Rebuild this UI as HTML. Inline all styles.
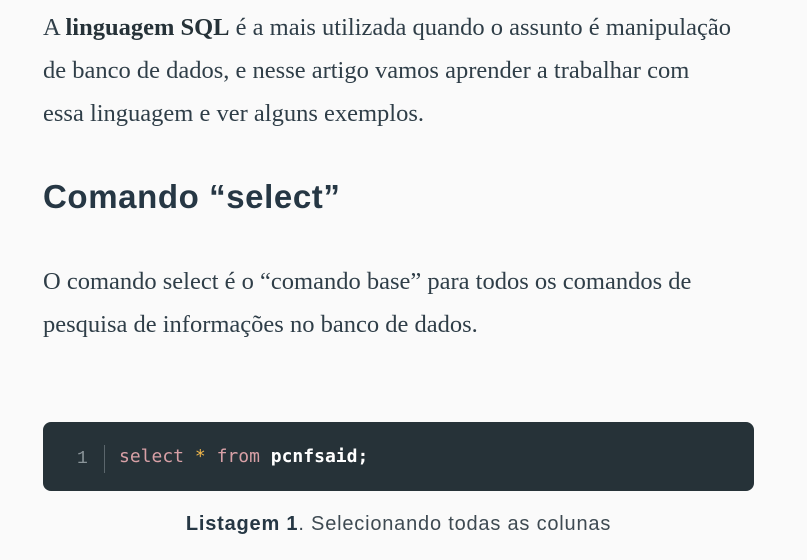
<!DOCTYPE html>
<html><head><meta charset="utf-8"><style>
html,body{margin:0;padding:0;background:#fafafa;width:807px;height:560px;overflow:hidden}
.p{position:absolute;left:43px;font-family:"Liberation Serif",serif;font-size:24.5px;color:#2f3e48;white-space:nowrap;line-height:43px}
.p b{color:#263238}
h2{position:absolute;left:43px;top:177px;margin:0;font-family:"Liberation Sans",sans-serif;font-weight:bold;font-size:33px;letter-spacing:0.6px;color:#263744;line-height:40px}
.code{position:absolute;left:43px;top:422px;width:711px;height:69px;background:#263238;border-radius:8px}
.ln{position:absolute;left:77px;top:447px;font-family:"Liberation Mono",monospace;font-size:18px;color:#8a9499;line-height:24px}
.bar{position:absolute;left:104px;top:445px;width:1px;height:28px;background:#5b666c}
.c{position:absolute;left:119px;top:444px;font-family:"DejaVu Sans Mono","Liberation Mono",monospace;font-size:18px;line-height:26px;color:#fff;font-weight:bold;white-space:pre}
.k{color:#d8a0a6;font-weight:normal}.s{color:#f2b84b;font-weight:normal}
.cap{position:absolute;left:0;width:797px;text-align:center;top:511px;font-family:"Liberation Sans",sans-serif;font-size:20px;letter-spacing:0.8px;color:#3e4a52;line-height:26px}
.cap b{color:#263744;font-weight:bold}
</style></head><body>
<div class="p" style="top:6px">A <b>linguagem SQL</b> é a mais utilizada quando o assunto é manipulação</div>
<div class="p" style="top:49px">de banco de dados, e nesse artigo vamos aprender a trabalhar com</div>
<div class="p" style="top:92px">essa linguagem e ver alguns exemplos.</div>
<h2>Comando “select”</h2>
<div class="p" style="top:260px">O comando select é o “comando base” para todos os comandos de</div>
<div class="p" style="top:303px">pesquisa de informações no banco de dados.</div>
<div class="code"></div>
<div class="ln">1</div>
<div class="bar"></div>
<div class="c"><span class="k">select</span> <span class="s">*</span> <span class="k">from</span> pcnfsaid;</div>
<div class="cap"><b>Listagem 1</b>. Selecionando todas as colunas</div>
</body></html>
